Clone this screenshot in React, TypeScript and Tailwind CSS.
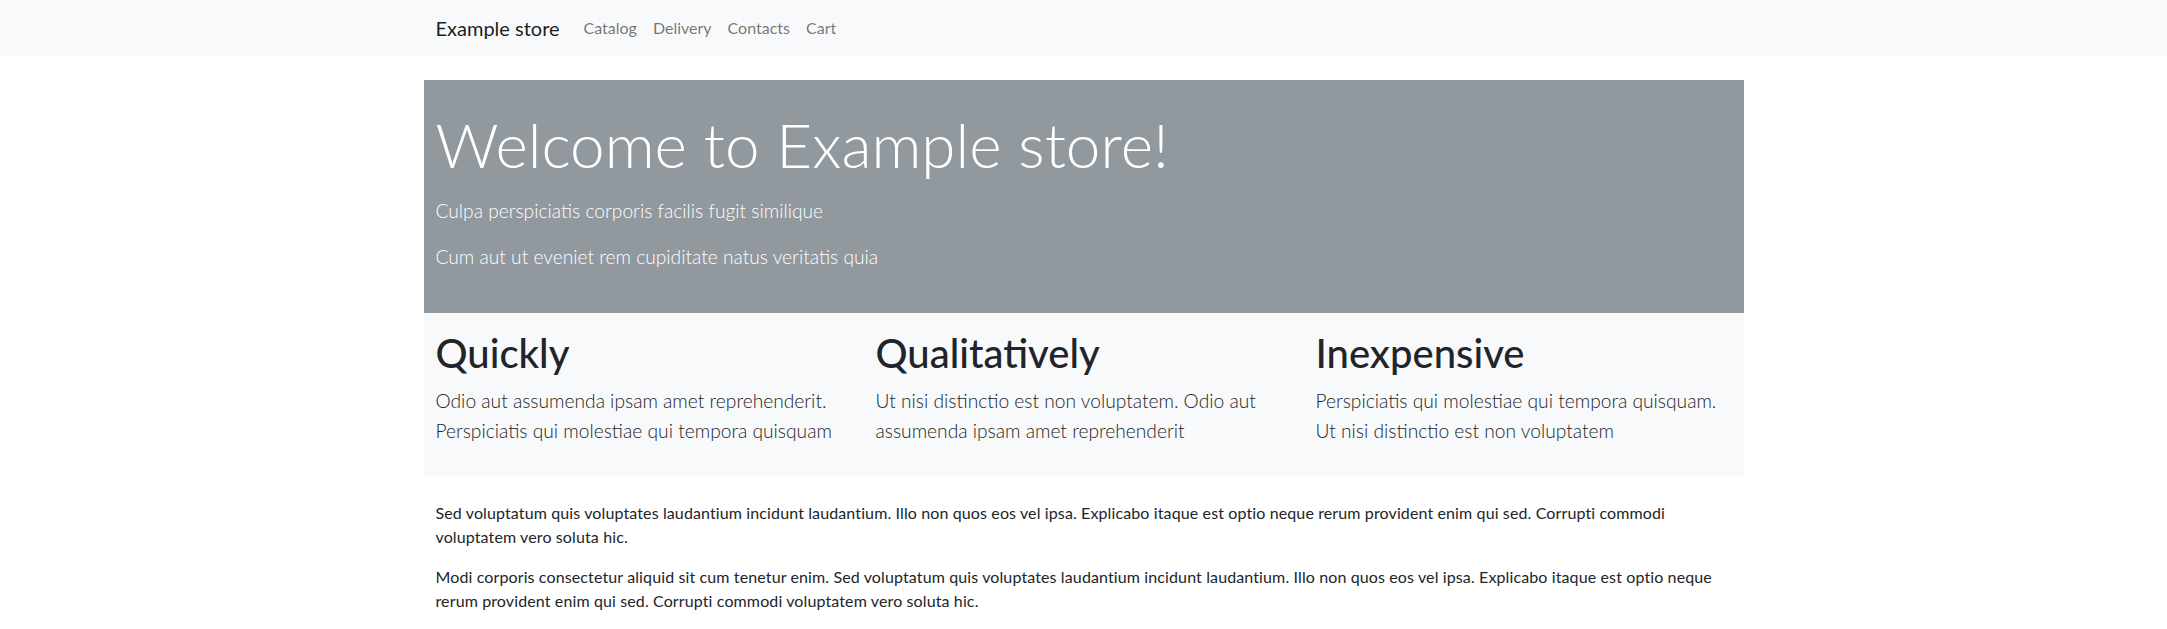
const navLinks = ['Catalog', 'Delivery', 'Contacts', 'Cart'];

const features = [
  {
    title: 'Quickly',
    text: 'Odio aut assumenda ipsam amet reprehenderit. Perspiciatis qui molestiae qui tempora quisquam',
  },
  {
    title: 'Qualitatively',
    text: 'Ut nisi distinctio est non voluptatem. Odio aut assumenda ipsam amet reprehenderit',
  },
  {
    title: 'Inexpensive',
    text: 'Perspiciatis qui molestiae qui tempora quisquam. Ut nisi distinctio est non voluptatem',
  },
];

function Navbar() {
  return (
    <nav className="bg-[#f8f9fa] py-2">
      <div className="w-[1320px] mx-auto px-3 flex items-center">
        <a href="#" className="text-[20px] leading-[30px] py-[5px] mr-4 text-black/90">
          Example store
        </a>
        <ul className="flex">
          {navLinks.map((link) => (
            <li key={link}>
              <a href="#" className="block px-2 py-2 text-base leading-6 text-black/55">
                {link}
              </a>
            </li>
          ))}
        </ul>
      </div>
    </nav>
  );
}

export default function App() {
  return (
    <div className="min-h-screen bg-white text-[#212529] font-['Lato',sans-serif]">
      <Navbar />

      <main className="w-[1320px] mx-auto mt-6">
        {/* Hero */}
        <section className="bg-[#91989e] text-white px-3 pt-6 pb-[25px]">
          <h1 className="text-[62px] leading-[80px] font-light mb-3">Welcome to Example store!</h1>
          <p className="text-[19.2px] leading-[30px] font-light mb-4">Culpa perspiciatis corporis facilis fugit similique</p>
          <p className="text-[19.2px] leading-[30px] font-light mb-4">Cum aut ut eveniet rem cupiditate natus veritatis quia</p>
        </section>

        {/* Features */}
        <section className="bg-[#f8f9fa] grid grid-cols-3 pt-4 pb-[14px]">
          {features.map((f) => (
            <div key={f.title} className="px-3">
              <h2 className="text-[40px] leading-[48px] font-medium mb-[9px]">{f.title}</h2>
              <p className="text-[19.2px] leading-[30px] font-light mb-4">{f.text}</p>
            </div>
          ))}
        </section>

        {/* Text */}
        <section className="px-3 mt-[25px] text-base leading-6 tracking-[0.12px]">
          <p className="mb-4">
            Sed voluptatum quis voluptates laudantium incidunt laudantium. Illo non quos eos vel ipsa. Explicabo itaque est optio neque rerum provident enim qui sed. Corrupti commodi voluptatem vero soluta hic.
          </p>
          <p className="mb-4">
            Modi corporis consectetur aliquid sit cum tenetur enim. Sed voluptatum quis voluptates laudantium incidunt laudantium. Illo non quos eos vel ipsa. Explicabo itaque est optio neque rerum provident enim qui sed. Corrupti commodi voluptatem vero soluta hic.
          </p>
        </section>
      </main>
    </div>
  );
}
